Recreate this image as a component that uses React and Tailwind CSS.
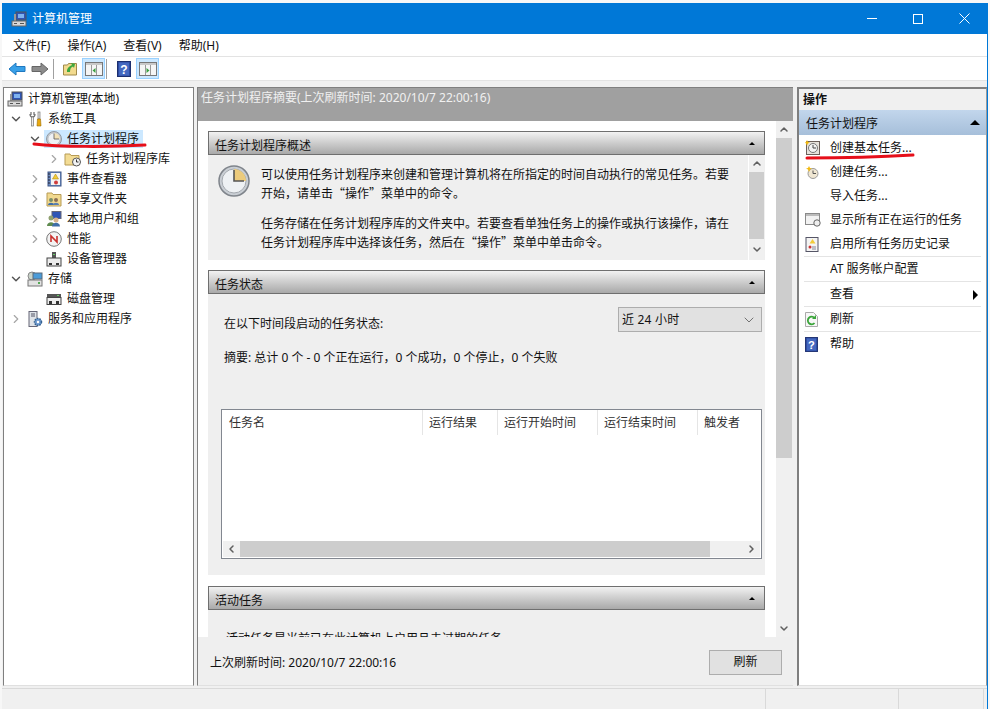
import { ChevronDown, ChevronRight, ChevronUp, ChevronLeft } from 'lucide-react';

function Clock({ size = 16 }) {
    return (
        <svg width={size} height={size} viewBox="0 0 32 32" className="shrink-0">
            <circle cx="16" cy="16" r="15" fill="#c9ced4" stroke="#7f848b" strokeWidth="1.500" />
            <circle cx="16" cy="16" r="12" fill="#eef1f4" stroke="#a4a9af" strokeWidth="1" />
            <path d="M16 16V4a12 12 0 0 1 12 12z" fill={size < 20 ? '#f2e2b8' : '#eccb7c'} />
            <path d="M16 5v11h10" fill="none" stroke="#555" strokeWidth="1.600" />
        </svg>
    );
}

function BasicTask() {
    return (
        <svg width="16" height="16" viewBox="0 0 16 16" className="shrink-0">
            <rect x="1.500" y="1.500" width="13" height="13" fill="#e6e2dc" stroke="#6b5f5a" />
            <circle cx="8" cy="8" r="4.500" fill="#f3f3f3" stroke="#777" />
            <path d="M8 5v3h3" fill="none" stroke="#444" />
            <path d="M2 0l1 2 2 .5-2 1L2 5.500 1 3.500l-1-1 1-.5z" fill="#f2b90f" />
        </svg>
    );
}

function NewTask() {
    return (
        <svg width="14" height="14" viewBox="0 0 14 14" className="shrink-0">
            <circle cx="8" cy="8.500" r="5" fill="#efe6d2" stroke="#9a9a9a" />
            <path d="M8 5.500v3h3" fill="none" stroke="#555" />
            <path d="M4 1l1 2 2 .5-2 1L4 7 3 4.500 1 3.500l2-.5z" fill="#f2b90f" />
        </svg>
    );
}

function FolderClock() {
    return (
        <svg width="18" height="16" viewBox="0 0 18 16" className="shrink-0">
            <path d="M1 3h5l1 1.500h8V14H1z" fill="#f3dc94" stroke="#b79b55" />
            <circle cx="12.500" cy="11" r="4" fill="#f2f3f4" stroke="#555" />
            <path d="M12.500 8.500V11h2" fill="none" stroke="#333" />
        </svg>
    );
}

function Computer({ size = 16 }) {
    return (
        <svg width={size} height={size} viewBox="0 0 16 16" className="shrink-0">
            <rect x="5" y="1" width="10" height="8" fill="#2f55b5" stroke="#555" />
            <rect x="7" y="3" width="6" height="4" fill="#7fb2ee" />
            <path d="M3 3h2v7H3z" fill="#999" />
            <rect x="1" y="10" width="14" height="5" fill="#d8d8d8" stroke="#666" />
            <path d="M3 12h3v1H3zM9 12h4v1H9z" fill="#555" />
        </svg>
    );
}

function Tools() {
    return (
        <svg width="16" height="16" viewBox="0 0 16 16" className="shrink-0">
            <path d="M4 1v3M7 1v3M3 3c0 2 1 3 2.500 3S8 5 8 3" fill="none" stroke="#777" strokeWidth="1.300" />
            <rect x="4.500" y="6" width="2" height="9" fill="#eee" stroke="#777" strokeWidth=".7" />
            <rect x="11" y="1" width="2" height="7" fill="#e4e4e4" stroke="#777" strokeWidth=".7" />
            <path d="M10.500 8h3l.5 7h-4z" fill="#e9a90f" stroke="#9a6b00" strokeWidth=".6" />
        </svg>
    );
}

function EventLog() {
    return (
        <svg width="16" height="16" viewBox="0 0 16 16" className="shrink-0">
            <rect x="2" y="1" width="13" height="14" fill="#6f8fc4" stroke="#3c5586" />
            <rect x="5" y="2" width="9" height="12" fill="#f4f4f4" />
            <path d="M9.500 3l3 5h-6z" fill="#f2cb3a" stroke="#a88100" strokeWidth=".5" />
            <circle cx="10" cy="11.500" r="2" fill="#cf3d3d" />
            <path d="M2 3h2M2 6h2M2 9h2M2 12h2" stroke="#223" />
        </svg>
    );
}

function SharedFolder() {
    return (
        <svg width="16" height="16" viewBox="0 0 16 16" className="shrink-0">
            <path d="M1 2h5l1 1.500h8V15H1z" fill="#f1d98f" stroke="#b79b55" />
            <circle cx="5" cy="9" r="2" fill="#7b8f6a" />
            <path d="M2 14c0-3 6-3 6 0z" fill="#3f6ea8" />
            <circle cx="10" cy="9" r="2" fill="#8a6f55" />
            <path d="M7 14c0-3 6-3 6 0z" fill="#5a7fb0" />
        </svg>
    );
}

function Users() {
    return (
        <svg width="16" height="16" viewBox="0 0 16 16" className="shrink-0">
            <rect x="6" y="0.500" width="9" height="7" fill="#2f55b5" stroke="#667" />
            <circle cx="5" cy="7" r="2.500" fill="#8fa06f" />
            <path d="M1 15c0-5 8-5 8 0z" fill="#5f8b4f" />
            <circle cx="10" cy="9" r="2.500" fill="#d8b38c" />
            <path d="M6 15.500c0-5 8-5 8 0z" fill="#3f6ea8" />
        </svg>
    );
}

function Perf() {
    return (
        <svg width="16" height="16" viewBox="0 0 16 16" className="shrink-0">
            <circle cx="8" cy="8" r="7.300" fill="#f3f3f3" stroke="#777" />
            <path d="M5 11V5l6 6V5" fill="none" stroke="#c9302c" strokeWidth="1.600" />
        </svg>
    );
}

function Device() {
    return (
        <svg width="16" height="16" viewBox="0 0 16 16" className="shrink-0">
            <rect x="6" y="1" width="4" height="6" fill="#555" />
            <rect x="7" y="3" width="2" height="1" fill="#6c6" />
            <rect x="1" y="7" width="14" height="8" fill="#ececec" stroke="#444" />
            <path d="M3 12h3v2H3zM10 12h3v2h-3z" fill="#333" />
        </svg>
    );
}

function Storage() {
    return (
        <svg width="16" height="16" viewBox="0 0 16 16" className="shrink-0">
            <circle cx="5" cy="5" r="4" fill="#c9d3c9" stroke="#888" />
            <rect x="6" y="2" width="9" height="6" fill="#4a9bd8" stroke="#5a6a7a" />
            <rect x="1" y="9" width="14" height="6" fill="#e2e2e2" stroke="#777" />
            <rect x="11" y="11" width="2" height="2" fill="#5a5" />
        </svg>
    );
}

function Disk() {
    return (
        <svg width="16" height="16" viewBox="0 0 16 16" className="shrink-0">
            <rect x="1" y="3" width="14" height="3.500" fill="#555" />
            <rect x="11" y="4" width="2" height="1" fill="#6c6" />
            <rect x="1" y="6.500" width="14" height="7" fill="#eee" stroke="#444" />
            <path d="M3 10h3v3H3zM10 10h3v3h-3z" fill="#333" />
        </svg>
    );
}

function Services() {
    return (
        <svg width="16" height="16" viewBox="0 0 16 16" className="shrink-0">
            <rect x="2" y="0.500" width="8" height="15" fill="#dfe3e8" stroke="#667" />
            <path d="M4 3h4M4 5h4" stroke="#556" />
            <circle cx="11" cy="11" r="3.500" fill="#6f9bd0" stroke="#35608f" strokeDasharray="1.500 1" strokeWidth="1.500" />
            <circle cx="11" cy="11" r="1.200" fill="#fff" />
        </svg>
    );
}

function HelpBook({ className = 'w-4 h-4' }) {
    return (
        <svg viewBox="0 0 14 16" className={`${className} shrink-0`}>
            <rect x="0.500" y="0.500" width="13" height="15" fill="#2c4aa0" stroke="#1c2f6f" />
            <rect x="2" y="1.500" width="10" height="13" fill="#4468c0" />
            <text x="7" y="12.500" textAnchor="middle" fontSize="12" fontWeight="700" fill="#fff" fontFamily="Liberation Sans">?</text>
        </svg>
    );
}

function PaneIcon({ right }) {
    return (
        <svg width="18" height="14" viewBox="0 0 18 14">
            <rect x="0.500" y="0.500" width="17" height="13" fill="#f5f5f5" stroke="#777" />
            <rect x="1" y="1" width="16" height="2" fill="#c8c8c8" />
            <path d="M6.500 3v10M11.500 3v10" stroke="#999" />
            {right
                ? <path d="M7.500 6l3 2.500-3 2.500z" fill="#3aa040" />
                : <path d="M10.500 6l-3 2.500 3 2.500z" fill="#3aa040" />}
        </svg>
    );
}

function TreeRow({ indent, arrow, icon, label, selected, root }) {
    return (
        <div className="h-5 flex items-center" style={{ paddingLeft: indent }}>
            {!root && (
                <span className="w-4 flex justify-center shrink-0">
                    {arrow === 'down' && <ChevronDown size={14} strokeWidth={2.500} className="text-[#555]" />}
                    {arrow === 'right' && <ChevronRight size={14} strokeWidth={2} className="text-[#a6a6a6]" />}
                </span>
            )}
            <div className={`ml-px pl-[2px] pr-px h-[18px] flex items-center ${selected ? 'bg-[#cce8ff]' : ''}`}>
                <span className="w-4 flex justify-center">{icon}</span>
                <span className="ml-[2px] px-[3px] leading-5">{label}</span>
            </div>
        </div>
    );
}

function SectionHead({ title }) {
    return (
        <div className="h-6 border border-[#6f6f6f] bg-gradient-to-b from-[#f2f2f2] to-[#a9a9a9] flex items-center justify-between pl-[6px] pr-[9px]">
            <span className="pt-[5px]">{title}</span>
            <span className="w-0 h-0 border-x-[3px] border-x-transparent border-b-[3px] border-b-black" />
        </div>
    );
}

function ActionRow({ icon, label, line, more, tall }) {
    return (
        <div className={`${tall ? 'h-[25px]' : 'h-6'} mx-[5px] flex items-center relative ${line ? 'border-b border-[#e4e4e4]' : ''}`}>
            <span className="w-[26px] pl-px flex shrink-0">{icon}</span>
            <span>{label}</span>
            {more && <span className="absolute right-[3px] top-2 w-0 h-0 border-y-[5px] border-y-transparent border-l-[5px] border-l-black" />}
        </div>
    );
}

const menus = ['文件(F)', '操作(A)', '查看(V)', '帮助(H)'];
const columns = [
    ['任务名', 'w-[201px] pl-[7px]'],
    ['运行结果', 'w-[75px] pl-[6px]'],
    ['运行开始时间', 'w-[100px] pl-[6px]'],
    ['运行结束时间', 'w-[100px] pl-[6px]'],
    ['触发者', 'flex-1 pl-[6px]'],
];

export default function App() {
    return (
        <div className="relative w-[990px] h-[709px] overflow-hidden bg-[#f7f7f7] pt-[3px] pl-[2px] pr-[2px] text-[12px] text-[#111] [font-family:'Noto_Sans','Noto_Sans_CJK_SC',sans-serif]">
            <div className="h-full flex flex-col bg-[#f0f0f0] border-r border-[#0078d7]">
                {/* title bar */}
                <div className="h-[31px] shrink-0 bg-[#0078d7] text-white flex items-center pl-[9px]">
                    <Computer />
                    <span className="ml-[5px] text-[12px]">计算机管理</span>
                    <div className="ml-auto flex items-center gap-[36px] pr-[17px]">
                        <span className="w-[10px] h-px bg-white" />
                        <span className="w-[10px] h-[10px] border border-white" />
                        <svg width="11" height="11" viewBox="0 0 11 11"><path d="M.5.500l10 10M10.500.500l-10 10" stroke="#fff" /></svg>
                    </div>
                </div>

                {/* menu */}
                <div className="h-[23px] shrink-0 bg-white border-b border-[#e3e3e3] flex items-center pl-[11px] gap-[17px]">
                    {menus.map((m) => <span key={m} className="pt-[1px]">{m}</span>)}
                </div>

                {/* toolbar */}
                <div className="h-[24px] shrink-0 bg-white border-b border-[#e3e3e3] flex items-center pl-[6px]">
                    <svg width="18" height="14" viewBox="0 0 18 14"><path d="M1 7l7-6v3.500h9v5H8V13z" fill="#38a0e8" stroke="#1f78c0" /></svg>
                    <svg width="18" height="14" viewBox="0 0 18 14" className="ml-[5px]"><path d="M17 7l-7-6v3.500H1v5h9V13z" fill="#8c8c8c" stroke="#666" /></svg>
                    <span className="w-px h-[20px] bg-[#a0a0a0] ml-[4px]" />
                    <svg width="14" height="15" viewBox="0 0 14 15" className="ml-[9px]">
                        <path d="M.5 4h4l1-1.500h8V14H.5z" fill="#f2da8e" stroke="#a08a4a" />
                        <path d="M4 9c1-3 3-4 5-5L8 2l4 1-1 4-1-1.500C8 6 7 8 7 11H4z" fill="#3ea83e" />
                    </svg>
                    <span className="ml-[5px] w-[23px] h-[21px] bg-[#cce8ff] border border-[#99d1ff] flex items-center justify-center"><PaneIcon /></span>
                    <span className="w-px h-[20px] bg-[#a0a0a0] ml-[1px]" />
                    <span className="ml-[10px] flex"><HelpBook className="w-[14px] h-[16px]" /></span>
                    <span className="ml-[5px] w-[23px] h-[21px] bg-[#cce8ff] border border-[#99d1ff] flex items-center justify-center"><PaneIcon right /></span>
                </div>

                {/* panes */}
                <div className="flex-1 flex pt-[6px] min-h-0">
                    {/* tree */}
                    <div className="w-[191px] ml-px shrink-0 bg-white border border-[#7f7f7f] border-b-[#e0e0e0] pt-[1px]">
                        <TreeRow root indent={0} icon={<Computer />} label="计算机管理(本地)" />
                        <TreeRow indent={4} arrow="down" icon={<Tools />} label="系统工具" />
                        <TreeRow indent={23} arrow="down" icon={<Clock size={16} />} label="任务计划程序" selected />
                        <TreeRow indent={42} arrow="right" icon={<FolderClock />} label="任务计划程序库" />
                        <TreeRow indent={23} arrow="right" icon={<EventLog />} label="事件查看器" />
                        <TreeRow indent={23} arrow="right" icon={<SharedFolder />} label="共享文件夹" />
                        <TreeRow indent={23} arrow="right" icon={<Users />} label="本地用户和组" />
                        <TreeRow indent={23} arrow="right" icon={<Perf />} label="性能" />
                        <TreeRow indent={23} icon={<Device />} label="设备管理器" />
                        <TreeRow indent={4} arrow="down" icon={<Storage />} label="存储" />
                        <TreeRow indent={23} icon={<Disk />} label="磁盘管理" />
                        <TreeRow indent={4} arrow="right" icon={<Services />} label="服务和应用程序" />
                    </div>

                    {/* center */}
                    <div className="w-[596px] ml-[3px] shrink-0 flex flex-col border-l border-t border-[#7f7f7f] border-b border-b-[#e0e0e0]">
                        <div className="h-[33px] shrink-0 bg-[#a0a0a0] text-[#f0f0f0] pl-[3px] pt-[1px]">任务计划程序摘要(上次刷新时间: 2020/10/7 22:00:16)</div>
                        <div className="h-[516px] shrink-0 flex overflow-hidden">
                            <div className="w-[578px] bg-white pl-[10px] pr-[11px] pt-[10px] overflow-hidden">
                                <SectionHead title="任务计划程序概述" />
                                <div className="h-[105px] bg-[#efefef] flex mb-[10px]">
                                    <span className="pl-[10px] pt-[10px]"><Clock size={32} /></span>
                                    <div className="w-[469px] ml-[11px] pt-[9px] leading-[19px] [font-family:'Noto_Sans_CJK_SC',sans-serif]">
                                        <p>可以使用任务计划程序来创建和管理计算机将在所指定的时间自动执行的常见任务。若要开始，请单击“操作”菜单中的命令。</p>
                                        <p className="mt-[11px]">任务存储在任务计划程序库的文件夹中。若要查看单独任务上的操作或执行该操作，请在任务计划程序库中选择该任务，然后在“操作”菜单中单击命令。</p>
                                    </div>
                                    <div className="w-[16px] ml-auto mr-px bg-[#f0f0f0] border-l border-white flex flex-col items-center">
                                        <ChevronUp size={12} strokeWidth={3} className="text-[#606060] h-[17px]" />
                                        <div className="w-full h-[67px] bg-[#cdcdcd]" />
                                        <ChevronDown size={12} strokeWidth={3} className="text-[#606060] mt-auto h-[21px]" />
                                    </div>
                                </div>

                                <SectionHead title="任务状态" />
                                <div className="h-[281px] bg-[#efefef] mb-[11px] pl-[13px] pr-[3px]">
                                    <div className="flex justify-between pt-[13px]">
                                        <span className="pl-[3px] pt-[8px]">在以下时间段启动的任务状态:</span>
                                        <div className="w-[144px] h-[25px] bg-[#e1e1e1] border border-[#adadad] flex items-center justify-between pl-[3px] pr-[4px]">
                                            <span className="tracking-[.2px]">近 24 小时</span>
                                            <ChevronDown size={16} strokeWidth={1.200} className="text-[#555]" />
                                        </div>
                                    </div>
                                    <p className="pl-[3px] mt-[16px]">摘要: 总计 0 个 - 0 个正在运行，0 个成功，0 个停止，0 个失败</p>
                                    <div className="mt-[42px] h-[150px] bg-white border border-[#828790] flex flex-col">
                                        <div className="flex h-[25px] text-[#333]">
                                            {columns.map(([name, w]) => (
                                                <span key={name} className={`${w} pt-[4px] border-r border-[#e5e5e5] last:border-r-0`}>{name}</span>
                                            ))}
                                        </div>
                                        <div className="mt-auto h-[16px] mb-px mx-px bg-[#f0f0f0] flex items-center">
                                            <ChevronLeft size={12} strokeWidth={3} className="text-[#606060] w-[17px]" />
                                            <div className="w-[470px] h-full bg-[#cdcdcd]" />
                                            <ChevronRight size={12} strokeWidth={3} className="text-[#606060] w-[17px] ml-auto" />
                                        </div>
                                    </div>
                                </div>

                                <SectionHead title="活动任务" />
                                <div className="h-[40px] bg-[#efefef] pl-[18px] pt-[20px] whitespace-nowrap">活动任务是当前已在此计算机上启用且未过期的任务</div>
                            </div>
                            <div className="w-[16px] bg-[#f0f0f0] flex flex-col items-center">
                                <ChevronUp size={12} strokeWidth={3} className="text-[#606060] h-[17px]" />
                                <div className="w-full h-[320px] bg-[#cdcdcd]" />
                                <ChevronDown size={12} strokeWidth={3} className="text-[#606060] mt-auto h-[17px]" />
                            </div>
                        </div>
                        <div className="flex-1 flex items-center justify-between pl-[12px] pr-[11px] bg-[#efefef]">
                            <span className="pt-[4px]">上次刷新时间: 2020/10/7 22:00:16</span>
                            <button className="w-[73px] h-[25px] mt-[2px] bg-[#e1e1e1] border border-[#adadad] text-[12px]">刷新</button>
                        </div>
                    </div>

                    {/* actions */}
                    <div className="w-[190px] ml-[4px] shrink-0 bg-white border-l-2 border-t-2 border-r border-[#7f7f7f] border-r-[#9a9a9a] border-b border-b-[#e0e0e0]">
                        <div className="h-[21px] bg-[#f0f0f0] pl-[4px] pt-[2px] font-bold">操作</div>
                        <div className="h-[25px] bg-gradient-to-b from-[#c2d6ec] to-[#a6bfda] pl-[7px] flex items-center justify-between pr-[6px]">
                            <span className="pt-[2px]">任务计划程序</span>
                            <span className="w-0 h-0 border-x-[5px] border-x-transparent border-b-[5px] border-b-black" />
                        </div>
                        <div className="pt-px">
                            <ActionRow icon={<BasicTask />} label="创建基本任务..." />
                            <ActionRow icon={<NewTask />} label="创建任务..." />
                            <ActionRow label="导入任务..." />
                            <ActionRow icon={<svg width="16" height="14" viewBox="0 0 16 14"><rect x=".5" y=".5" width="14" height="11" fill="#f2f2f2" stroke="#8a8a8a" /><rect x="1" y="1" width="13" height="2" fill="#bbb" /><circle cx="12" cy="10" r="3.200" fill="#eee" stroke="#666" /></svg>} label="显示所有正在运行的任务" />
                            <ActionRow tall line icon={<svg width="14" height="15" viewBox="0 0 14 15"><rect x="1" y=".5" width="12" height="14" fill="#f4f4f4" stroke="#556" /><path d="M7.500 2l3 4.500h-6z" fill="#f2cb3a" /><circle cx="5" cy="10" r="1.500" fill="#c33" /><path d="M7 10h4M7 12h4" stroke="#889" /></svg>} label="启用所有任务历史记录" />
                            <ActionRow tall line label="AT 服务帐户配置" />
                            <ActionRow tall line label="查看" more />
                            <ActionRow tall line icon={<svg width="13" height="15" viewBox="0 0 13 15"><path d="M.5.500h8l4 4v10H.5z" fill="#f7f7f7" stroke="#aaa" /><path d="M9.500 6a3.800 3.800 0 1 0 0 5" fill="none" stroke="#3aa53a" strokeWidth="1.800" /><path d="M7 7h4V3z" fill="#3aa53a" /></svg>} label="刷新" />
                            <ActionRow icon={<HelpBook className="w-[13px] h-[15px]" />} label="帮助" />
                        </div>
                    </div>
                </div>

                {/* status bar */}
                <div className="h-[21px] shrink-0 mt-[2px] bg-[#f0f0f0] border-t border-[#d9d9d9] flex">
                    <span className="w-[764px] border-r border-[#d9d9d9]" />
                    <span className="w-[133px] border-r border-[#d9d9d9]" />
                    <span className="w-[85px] border-r border-[#d9d9d9]" />
                </div>
            </div>

            {/* red pen marks on the screenshot */}
            <svg className="absolute left-0 top-0 pointer-events-none" width="990" height="709" viewBox="0 0 990 709" fill="none">
                <path d="M34 144C60 147 110 147 145 145" stroke="#e60f1a" strokeWidth="3" strokeLinecap="round" />
                <path d="M807 158C840 158 880 157 913 155" stroke="#e60f1a" strokeWidth="3" strokeLinecap="round" />
            </svg>
        </div>
    );
}
